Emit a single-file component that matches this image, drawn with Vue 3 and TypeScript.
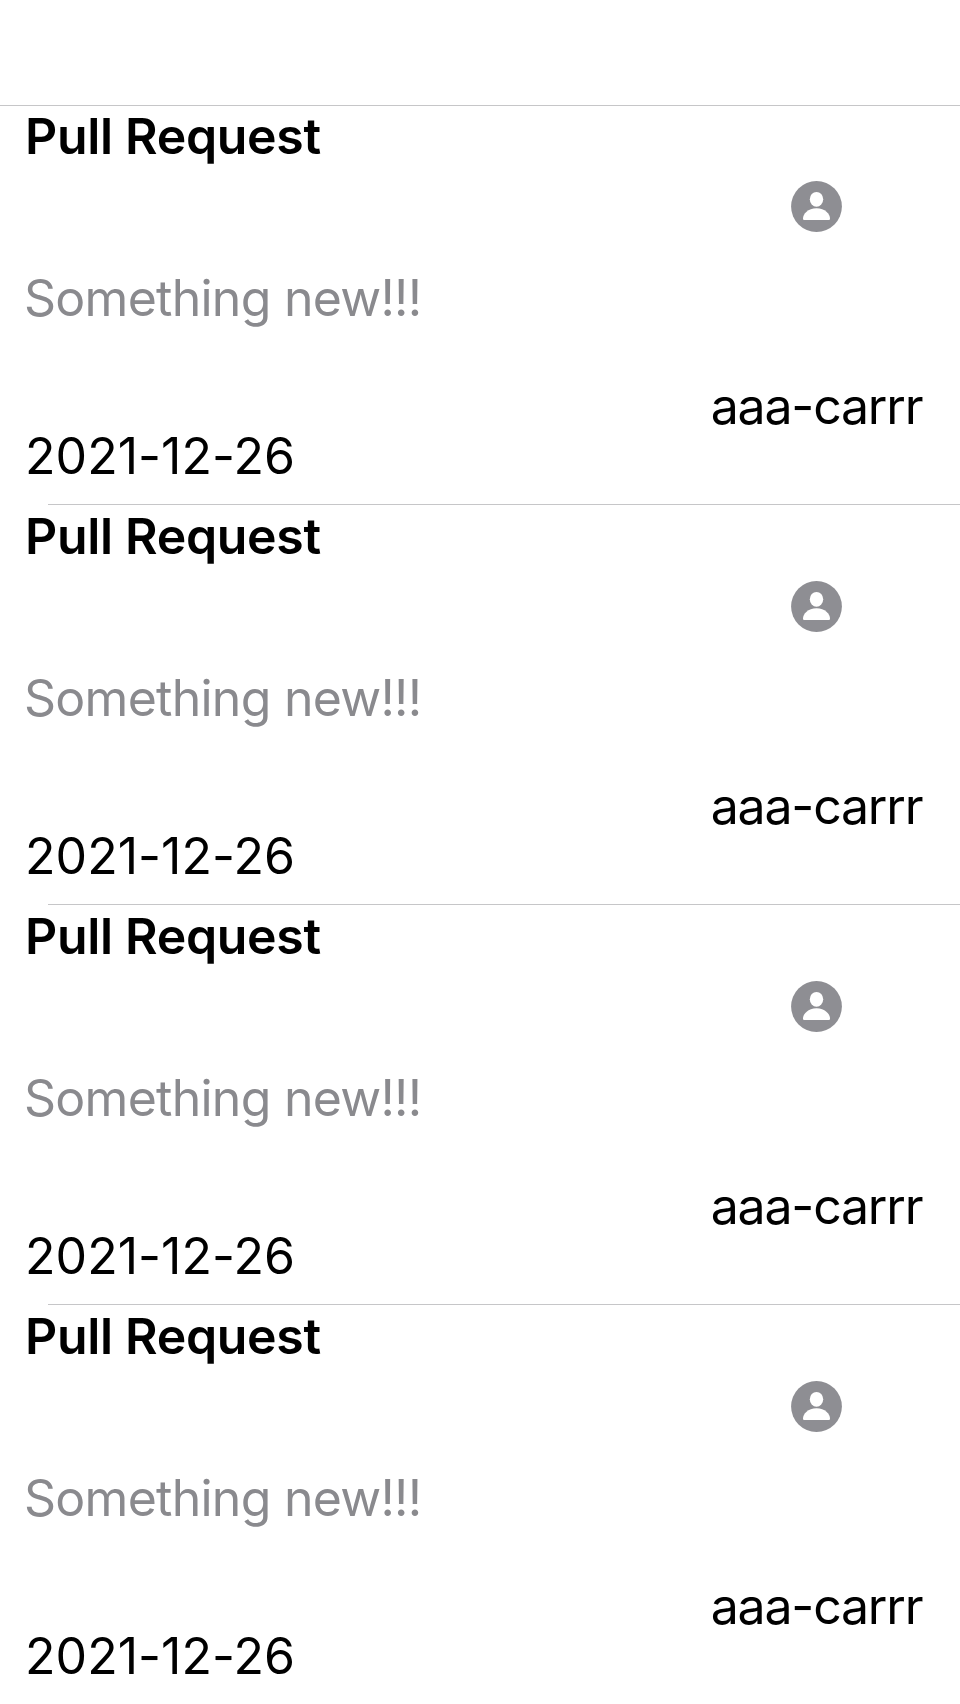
<script setup lang="ts">
interface PullRequest { id: number; title: string; body: string; date: string; user: string }
const items: PullRequest[] = [1, 2, 3, 4].map((id) => ({
  id,
  title: 'Pull Request',
  body: 'Something new!!!',
  date: '2021-12-26',
  user: 'aaa-carrr',
}))
</script>

<template>
  <main class="screen">
    <header class="bar"></header>
    <article v-for="item in items" :key="item.id" class="cell">
      <div class="info">
        <h2 class="title">{{ item.title }}</h2>
        <p class="body">{{ item.body }}</p>
        <time class="date">{{ item.date }}</time>
      </div>
      <div class="author">
        <svg class="avatar" viewBox="0 0 51 51">
          <circle cx="25.5" cy="25.5" r="25.4" fill="#8e8e93" />
          <ellipse cx="25.5" cy="18.3" rx="6.7" ry="7.4" fill="#fff" />
          <path d="M12 37.2C12 33.2 17 27.2 25.5 27.2S39 33.2 39 37.2C39 38.6 38.5 39.1 37.4 39.1H13.6C12.5 39.1 12 38.6 12 37.2Z" fill="#fff" />
        </svg>
        <span class="user">{{ item.user }}</span>
      </div>
    </article>
  </main>
</template>

<style>
body { margin: 0; background: #fff; }
</style>
<style scoped>
.screen { width: 960px; height: 1704px; overflow: hidden; background: #fff; color: #000; font-family: Inter, "Liberation Sans", sans-serif; font-size: 50px; line-height: 60px; white-space: nowrap; }
.bar { height: 105px; border-bottom: 1px solid #c6c6c8; margin-bottom: -1px; }
.cell { height: 400px; box-sizing: border-box; display: flex; justify-content: space-between; padding: 0 37px 0 25px; background: linear-gradient(#c6c6c8, #c6c6c8) 48px 100% / 912px 1px no-repeat; }
.title, .body { margin: 0; }
.title { font-size: 50px; font-weight: 600; padding-top: 1px; letter-spacing: -0.32px; }
.body { color: #8a8a8e; margin: 102px 0 0 -1px; letter-spacing: -0.74px; }
.date { display: block; margin-top: 98px; letter-spacing: 0.05px; }
.author { display: flex; flex-direction: column; align-items: center; width: 213px; padding-top: 76px; }
.avatar { width: 51px; height: 51px; flex: none; }
.user { margin-top: 144px; letter-spacing: -1.2px; }
</style>
